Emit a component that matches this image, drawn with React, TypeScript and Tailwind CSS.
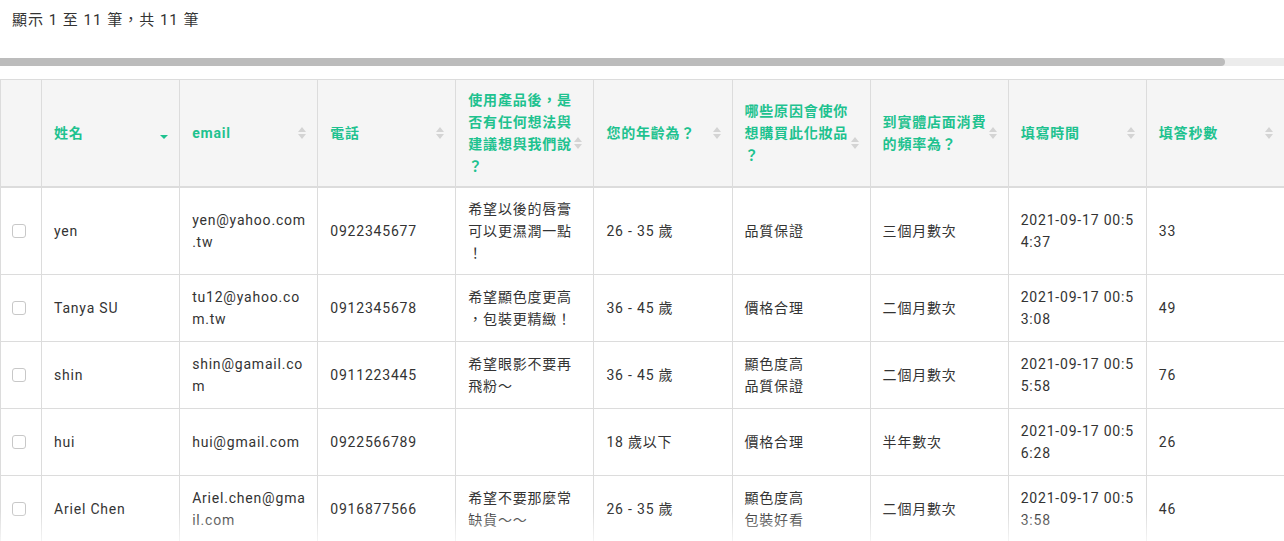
const heads = [["姓名"],["email"],["電話"],["使用產品後，是","否有任何想法與","建議想與我們說","？"],["您的年齡為？"],["哪些原因會使你","想購買此化妝品","？"],["到實體店面消費","的頻率為？"],["填寫時間"],["填答秒數"]];
const rows: string[][][] = [
  [["yen"],["yen@yahoo.com",".tw"],["0922345677"],["希望以後的唇膏","可以更濕潤一點","！"],["26 - 35 歲"],["品質保證"],["三個月數次"],["2021-09-17 00:5","4:37"],["33"]],
  [["Tanya SU"],["tu12@yahoo.co","m.tw"],["0912345678"],["希望顯色度更高","，包裝更精緻！"],["36 - 45 歲"],["價格合理"],["二個月數次"],["2021-09-17 00:5","3:08"],["49"]],
  [["shin"],["shin@gamail.co","m"],["0911223445"],["希望眼影不要再","飛粉～"],["36 - 45 歲"],["顯色度高","品質保證"],["二個月數次"],["2021-09-17 00:5","5:58"],["76"]],
  [["hui"],["hui@gmail.com"],["0922566789"],[],["18 歲以下"],["價格合理"],["半年數次"],["2021-09-17 00:5","6:28"],["26"]],
  [["Ariel Chen"],["Ariel.chen@gma","il.com"],["0916877566"],["希望不要那麼常","缺貨～～"],["26 - 35 歲"],["顯色度高","包裝好看"],["二個月數次"],["2021-09-17 00:5","3:58"],["46"]],
];
function Sort({ active, low }: { active?: boolean; low?: boolean }) {
  if (active) return <svg width="10" height="10" viewBox="0 0 10 10" className="absolute right-[10px] top-1/2 -translate-y-1/2 mt-[4px]"><path d="M1 3h8L5 7z" fill="#1ec28f"/></svg>;
  return <svg width="10" height="14" viewBox="0 0 10 14" className={"absolute right-[10px] top-1/2 -translate-y-1/2 " + (low ? "mt-[10px]" : "")}><path d="M1 6h8L5 1z M1 8h8l-4 5z" fill="#d4d4d4"/></svg>;
}
export default function App() {
  return (
    <div className="relative w-[1284px] h-[541px] overflow-hidden bg-white" style={{ fontFamily: "Roboto, 'Noto Sans CJK TC', sans-serif" }}>
      <div className="h-[41px] pl-[12px] pt-[9px] text-[15px] tracking-[1px] text-[#333] leading-[22px]">顯示 1 至 11 筆，共 11 筆</div>
      <div className="mt-[17px] h-[8px] bg-[#ececec] w-[1284px]"><div className="h-[8px] w-[1225px] rounded-r-full bg-[#bcbcbc]"></div></div>
      <table className="mt-[13px] border-collapse table-fixed w-[1285px] text-[14px] leading-[22px] tracking-[0.8px]">
        <colgroup><col className="w-[41px]"/>{heads.map((_, i) => <col key={i} className="w-[138px]"/>)}</colgroup>
        <thead>
          <tr className="h-[107px] bg-[#f5f5f5] border-b-2 border-[#dcdcdc]">
            <th className="border border-[#dcdcdc]"></th>
            {heads.map((h, i) => (
              <th key={i} className="relative border border-[#dcdcdc] pl-[12px] pr-[8px] text-left font-bold text-[#1ec28f] align-middle whitespace-nowrap">
                {h.map((l, li) => <div key={li}>{l}</div>)}<Sort active={i === 0} low={h.length > 2} />
              </th>
            ))}
          </tr>
        </thead>
        <tbody>
          {rows.map((r, ri) => (
            <tr key={ri} className={ri === 0 ? "h-[88px]" : "h-[67px]"}>
              <td className="border border-[#dcdcdc] text-center align-middle">
                <div className="ml-[11px] w-[14px] h-[14px] rounded-[3px] border border-[#c8c8c8]"></div>
              </td>
              {r.map((c, ci) => (
                <td key={ci} className="border border-[#dcdcdc] pl-[12px] pr-[4px] py-[10px] text-[#333] align-middle whitespace-nowrap overflow-hidden">
                  {c.map((l, li) => <div key={li}>{l}</div>)}
                </td>
              ))}
            </tr>
          ))}
        </tbody>
      </table>
      <div className="pointer-events-none absolute bottom-0 left-0 right-0 h-[30px] bg-gradient-to-b from-transparent to-white/70"></div>
    </div>
  );
}
